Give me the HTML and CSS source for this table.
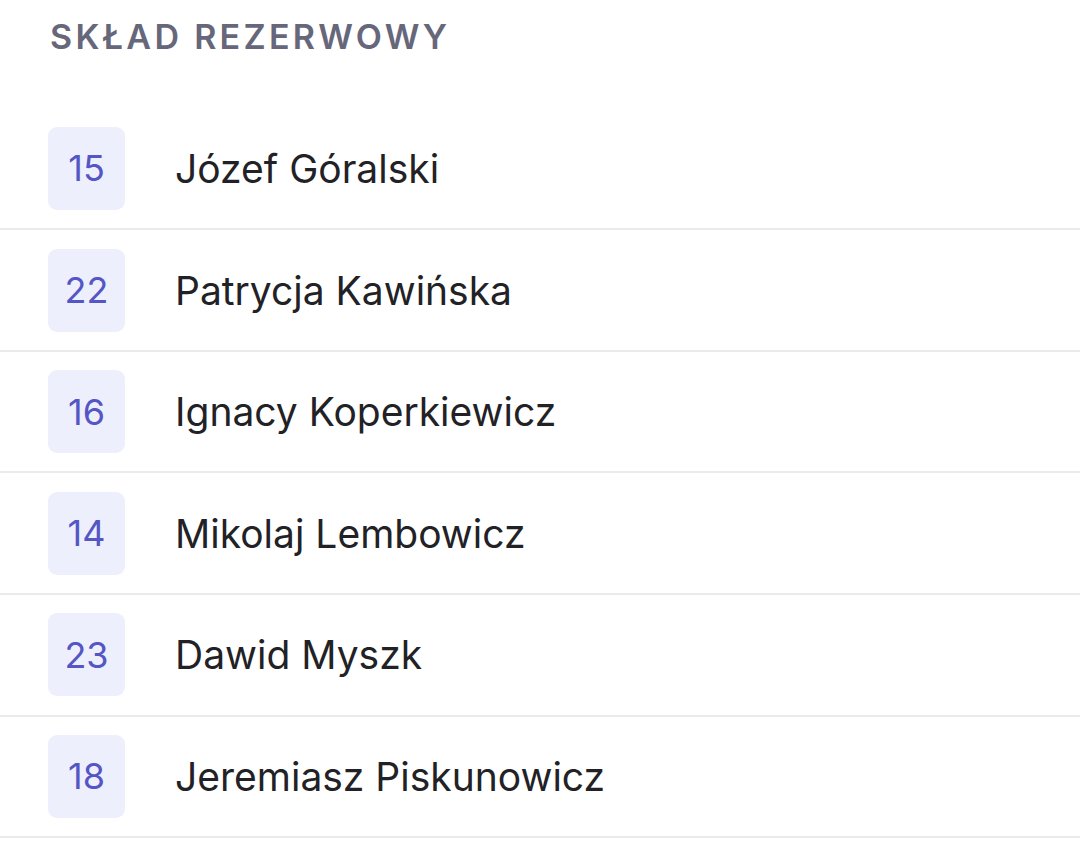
FILE: index.html
```html
<!DOCTYPE html>
<html lang="pl">
<head>
    <meta charset="UTF-8">
    <meta name="viewport" content="width=device-width, initial-scale=1.0">
    <title>Skład rezerwowy</title>
    <link rel="stylesheet" href="styles.css">
</head>
<body>
    <h2 class="section-title">SKŁAD REZERWOWY</h2>
    <ul class="player-list">
        <li class="player-row"><span class="player-number">15</span><span class="player-name">Józef Góralski</span></li>
        <li class="player-row"><span class="player-number">22</span><span class="player-name">Patrycja Kawińska</span></li>
        <li class="player-row"><span class="player-number">16</span><span class="player-name">Ignacy Koperkiewicz</span></li>
        <li class="player-row"><span class="player-number">14</span><span class="player-name">Mikolaj Lembowicz</span></li>
        <li class="player-row"><span class="player-number">23</span><span class="player-name">Dawid Myszk</span></li>
        <li class="player-row"><span class="player-number">18</span><span class="player-name">Jeremiasz Piskunowicz</span></li>
    </ul>
</body>
</html>
```

FILE: styles.css
```css
body {
    margin: 0;
    background: #ffffff;
    font-family: Inter, "Noto Sans", sans-serif;
}
.section-title {
    box-sizing: border-box;
    height: 108.7px;
    margin: 0;
    padding: 20px 0 0 50px;
    font-size: 34px;
    line-height: 34px;
    font-weight: 600;
    letter-spacing: 3.3px;
    color: #67677b;
}
.player-list {
    list-style: none;
    margin: 0;
    padding: 0;
}
.player-row {
    display: flex;
    align-items: center;
    gap: 50px;
    padding: 18.3px 0 18.3px 48px;
    border-bottom: 2px solid #eaeaec;
}
.player-number {
    display: flex;
    align-items: center;
    justify-content: center;
    width: 77px;
    height: 83px;
    border-radius: 9px;
    background: #eeeffc;
    color: #5356c4;
    font-size: 36px;
}
.player-name {
    font-size: 39px;
    color: #222226;
}
```
